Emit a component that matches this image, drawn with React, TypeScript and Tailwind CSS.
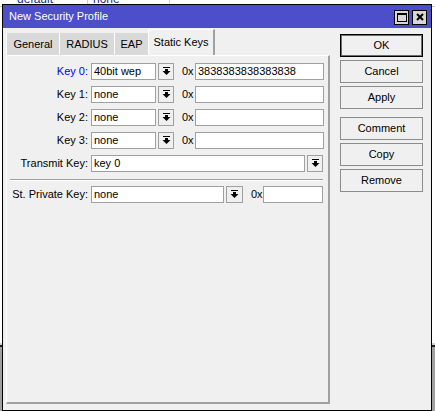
import React from "react";

const font = "font-['Liberation_Sans',Arial,sans-serif]";

const DropArrow: React.FC = () => (
  <svg width="9" height="9" viewBox="0 0 9 9" className="block">
    <rect x="1" y="0" width="7" height="1" fill="#000" />
    <rect x="3" y="2" width="3" height="2" fill="#000" />
    <polygon points="0.5,4 8.5,4 4.5,8" fill="#000" />
  </svg>
);

const DropButton: React.FC<{ w?: string }> = ({ w = "w-[16px]" }) => (
  <div className={`${w} h-[17px] ml-[2px] border border-[#a0a0a0] bg-[#f0f0f0] flex items-center justify-center`}>
    <DropArrow />
  </div>
);

const Field: React.FC<{ w: string; value?: string }> = ({ w, value }) => (
  <div className={`${w} h-[17px] border border-[#a0a0a0] bg-white pl-[2px] text-[11px] leading-[15px] text-black whitespace-nowrap overflow-hidden`}>
    {value}
  </div>
);

const KeyRow: React.FC<{ label: string; type: string; hex?: string; active?: boolean }> = ({ label, type, hex, active }) => (
  <div className="flex items-center h-[17px]">
    <div className={`w-[81px] text-right text-[11px] ${active ? "text-[#0000ff]" : "text-black"}`}>{label}</div>
    <div className="ml-[3px]">
      <Field w="w-[65px]" value={type} />
    </div>
    <DropButton />
    <span className="ml-[8px] w-[13px] text-[11px] text-black">0x</span>
    <Field w="w-[129px]" value={hex} />
  </div>
);

const SideButton: React.FC<{ label: string; primary?: boolean; className?: string }> = ({ label, primary, className = "" }) => (
  <div
    className={`h-[23px] w-[83px] flex items-center justify-center text-[11px] text-black bg-[#f0f0f0] ${
      primary ? "border border-black shadow-[inset_0_0_0_1px_#6e6e6e]" : "border border-[#8c8c8c]"
    } ${className}`}
  >
    {label}
  </div>
);

const Tab: React.FC<{ label: string; w: string; active?: boolean }> = ({ label, w, active }) =>
  active ? (
    <div className={`${w} h-[27px] bg-[#f0f0f0] border-l border-t border-white border-r-2 border-r-[#a0a0a0] flex items-center justify-center text-[11px] text-black -mb-px pb-[1px]`}>
      {label}
    </div>
  ) : (
    <div className={`${w} h-[22px] bg-[#d9d9d9] border-l border-white flex items-center justify-center text-[11px] text-black`}>
      {label}
    </div>
  );

export default function App() {
  return (
    <div className={`relative w-[435px] h-[411px] overflow-hidden bg-white ${font}`}>
      {/* desktop behind the window */}
      <div className="flex flex-col h-full">
        <div className="flex h-[5px] overflow-hidden items-start text-[12px] leading-[4px] text-[#1c2d8a]">
          <div className="w-[88px] pl-[17px] border-r border-[#d0d0d0] h-full">
            <div className="mt-[-3px] h-[4px]">default</div>
          </div>
          <div className="w-[82px] pl-[5px] border-r border-[#d0d0d0] h-full">
            <div className="mt-[-3px] h-[4px]">none</div>
          </div>
        </div>
        <div className="h-[2px] border-b border-[#c8c8c8]" />
        <div className="flex-1" />
        <div className="h-[66px] bg-[#a0a0a0] border-t-2 border-[#202020] shadow-[0_-2px_0_#d0d0d0]" />
      </div>

      {/* window */}
      <div className="absolute left-[2px] top-[4px] w-[430px] h-[407px] border border-black bg-[#f0f0f0] flex flex-col">
        <div className="h-[23px] bg-[#4c4fc9] flex items-center pl-[6px] pr-[4px]">
          <span className="text-[11px] text-white flex-1">New Security Profile</span>
          <div className="flex gap-[3px] mt-[1px]">
            <div className="w-[15px] h-[15px] bg-[#d8d8d8] border border-black flex items-center justify-center">
              <div className="w-[10px] h-[9px] border border-black border-t-2" />
            </div>
            <div className="w-[15px] h-[15px] bg-[#d8d8d8] border border-black flex items-center justify-center">
              <svg width="8" height="8" viewBox="0 0 8 8">
                <path d="M1 1 L7 7 M7 1 L1 7" stroke="#000" strokeWidth="2" />
              </svg>
            </div>
          </div>
        </div>

        <div className="flex flex-1">
          <div className="ml-[3px] w-[324px] flex flex-col">
            <div className="h-[27px] flex items-end">
              <Tab label="General" w="w-[53px]" />
              <Tab label="RADIUS" w="w-[55px]" />
              <Tab label="EAP" w="w-[34px]" />
              <Tab label="Static Keys" w="w-[67px]" active />
            </div>
            <div className="h-[349px] border-l border-t border-white border-r-2 border-b-2 border-r-[#a0a0a0] border-b-[#a0a0a0] pt-[7px]">
              <div className="flex flex-col gap-[6px]">
                <KeyRow label="Key 0:" type="40bit wep" hex="3838383838383838" active />
                <KeyRow label="Key 1:" type="none" />
                <KeyRow label="Key 2:" type="none" />
                <KeyRow label="Key 3:" type="none" />
                <div className="flex items-center h-[17px]">
                  <div className="w-[81px] text-right text-[11px] text-black">Transmit Key:</div>
                  <div className="ml-[3px]">
                    <Field w="w-[214px]" value="key 0" />
                  </div>
                  <DropButton />
                </div>
              </div>
              <div className="ml-[3px] w-[313px] mt-[7px] border-t border-[#a0a0a0] border-b border-b-white" />
              <div className="flex items-center h-[17px] mt-[5px]">
                <div className="w-[81px] text-right text-[11px] text-black">St. Private Key:</div>
                <div className="ml-[3px]">
                  <Field w="w-[133px]" value="none" />
                </div>
                <DropButton w="w-[17px]" />
                <span className="ml-[8px] w-[12px] text-[11px] text-black">0x</span>
                <Field w="w-[60px]" />
              </div>
            </div>
          </div>

          <div className="ml-[10px] mt-[6px] flex flex-col">
            <SideButton label="OK" primary />
            <SideButton label="Cancel" className="mt-[3px]" />
            <SideButton label="Apply" className="mt-[3px]" />
            <SideButton label="Comment" className="mt-[8px]" />
            <SideButton label="Copy" className="mt-[3px]" />
            <SideButton label="Remove" className="mt-[3px]" />
          </div>
        </div>
      </div>
    </div>
  );
}
